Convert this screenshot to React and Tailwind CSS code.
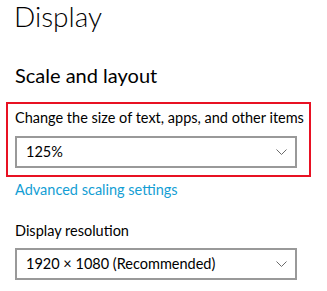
import React from 'react';

// Chevron used by the combo boxes
const Chevron = () => (
  <svg width="11" height="6" viewBox="0 0 11 6" fill="none">
    <polyline points="0.5,0.5 5.5,5.5 10.5,0.5" stroke="#6b6b6b" strokeWidth="1" />
  </svg>
);

const ComboBox = ({ value }) => (
  <div className="flex h-[32px] w-[282px] items-center justify-between border-2 border-[#999999] bg-white pl-[9px] pr-[8px]">
    <span className="text-[14.5px] leading-[20px] text-black">{value}</span>
    <Chevron />
  </div>
);

export default function App() {
  return (
    <div
      className="h-[291px] w-[327px] overflow-hidden bg-white pl-[15px] text-black"
      style={{ fontFamily: 'Lato, "Open Sans", sans-serif' }}
    >
      {/* Page title */}
      <div className="h-[32px] text-[28px] font-light leading-[32px] -ml-[1px]">Display</div>

      {/* Section header */}
      <div className="mt-[29px] h-[28px] text-[20px] leading-[28px]">Scale and layout</div>

      {/* Scale setting, highlighted with a red frame */}
      <div className="relative mt-[19px] w-[282px]">
        <div className="whitespace-nowrap text-[14.5px] leading-[20px]">
          Change the size of text, apps, and other items
        </div>
        <div className="mt-[8px]">
          <ComboBox value="125%" />
        </div>
        <div className="pointer-events-none absolute -top-[6px] -bottom-[9px] -left-[9px] -right-[14px] border-2 border-[#e81123]" />
      </div>

      <div className="mt-[12px] text-[14.5px] leading-[20px] text-[#139ed4]">Advanced scaling settings</div>

      <div className="mt-[21px] text-[14.5px] leading-[20px]">Display resolution</div>
      <div className="mt-[7px]">
        <ComboBox value="1920 × 1080 (Recommended)" />
      </div>
    </div>
  );
}
